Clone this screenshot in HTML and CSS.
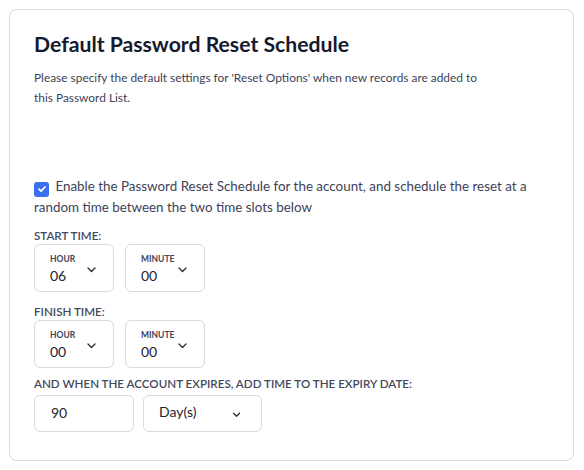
FILE: index.html
```html
<!DOCTYPE html>
<html>
<head>
<meta charset="utf-8">
<link rel="stylesheet" href="styles.css">
</head>
<body>
<div class="card">
  <h2 class="title">Default Password Reset Schedule</h2>
  <p class="desc">Please specify the default settings for 'Reset Options' when new records are added to this Password List.</p>
  <div class="enable">
    <span class="check"><svg width="10" height="10" viewBox="0 0 10 10"><path d="M2 5.2 L4.1 7.2 L8 3" fill="none" stroke="#fff" stroke-width="1.8" stroke-linecap="round" stroke-linejoin="round"/></svg></span>
    Enable the Password Reset Schedule for the account, and schedule the reset at a random time between the two time slots below
  </div>

  <div class="label">START TIME:</div>
  <div class="row">
    <div class="sel">
      <div class="sel-text"><span class="cap">HOUR</span><span class="val">06</span></div>
      <svg class="chev" width="9" height="6" viewBox="0 0 9 6"><path d="M1 1 L4.5 4.5 L8 1" fill="none" stroke="#2b2f3f" stroke-width="1.4" stroke-linecap="round" stroke-linejoin="round"/></svg>
    </div>
    <div class="sel">
      <div class="sel-text"><span class="cap">MINUTE</span><span class="val">00</span></div>
      <svg class="chev" width="9" height="6" viewBox="0 0 9 6"><path d="M1 1 L4.5 4.5 L8 1" fill="none" stroke="#2b2f3f" stroke-width="1.4" stroke-linecap="round" stroke-linejoin="round"/></svg>
    </div>
  </div>

  <div class="label label-fin">FINISH TIME:</div>
  <div class="row">
    <div class="sel">
      <div class="sel-text"><span class="cap">HOUR</span><span class="val">00</span></div>
      <svg class="chev" width="9" height="6" viewBox="0 0 9 6"><path d="M1 1 L4.5 4.5 L8 1" fill="none" stroke="#2b2f3f" stroke-width="1.4" stroke-linecap="round" stroke-linejoin="round"/></svg>
    </div>
    <div class="sel">
      <div class="sel-text"><span class="cap">MINUTE</span><span class="val">00</span></div>
      <svg class="chev" width="9" height="6" viewBox="0 0 9 6"><path d="M1 1 L4.5 4.5 L8 1" fill="none" stroke="#2b2f3f" stroke-width="1.4" stroke-linecap="round" stroke-linejoin="round"/></svg>
    </div>
  </div>

  <div class="label label-exp">AND WHEN THE ACCOUNT EXPIRES, ADD TIME TO THE EXPIRY DATE:</div>
  <div class="row row-exp">
    <div class="input">90</div>
    <div class="unit">
      <span class="val">Day(s)</span>
      <svg class="chev2" width="9" height="6" viewBox="0 0 9 6"><path d="M1.5 1.2 L4.5 4.2 L7.5 1.2" fill="none" stroke="#2b2f3f" stroke-width="1.4" stroke-linecap="round" stroke-linejoin="round"/></svg>
    </div>
  </div>
</div>
</body>
</html>
```

FILE: styles.css
```css
* { box-sizing: border-box; }
html, body { margin: 0; padding: 0; background: #ffffff; }
body {
  font-family: "Lato", "Noto Sans", sans-serif;
  color: #3e4257;
  padding: 9px 10px 0 9px;
}
.card {
  width: 565px;
  height: 452px;
  border: 1px solid #d6dae3;
  border-radius: 8px;
  padding: 20px 24px 0 24px;
}
.title {
  margin: 0;
  font-size: 21.2px;
  line-height: 28px;
  font-weight: 700;
  color: #151a2d;
}
.desc {
  margin: 10px 0 0 0;
  max-width: 452px;
  font-size: 11.9px;
  line-height: 20px;
  color: #3e4257;
}
.enable {
  margin-top: 68px;
  font-size: 13.4px;
  line-height: 20px;
  color: #3e4257;
}
.check {
  display: inline-flex;
  align-items: center;
  justify-content: center;
  width: 15px;
  height: 15px;
  border-radius: 3px;
  background: #3a6ff0;
  vertical-align: -3px;
  margin-right: 3px;
}
.label {
  margin-top: 11px;
  height: 16px;
  font-size: 11.6px;
  line-height: 16px;
  font-weight: 600;
  color: #444a5e;
}
.row {
  display: flex;
  gap: 11px;
  margin-top: 0;
}
.sel {
  width: 80px;
  height: 48px;
  border: 1px solid #d6dae3;
  border-radius: 6px;
  display: flex;
  align-items: flex-start;
  justify-content: space-between;
  padding: 9px 17px 0 15px;
}
.sel-text {
  display: flex;
  flex-direction: column;
}
.cap {
  font-size: 8.5px;
  line-height: 10px;
  font-weight: 700;
  color: #3f4458;
}
.val {
  font-size: 14px;
  line-height: 18px;
  margin-top: 3px;
  color: #1f2334;
}
.chev { margin-top: 13px; }
.label-fin { margin-top: 12px; }
.label-exp { margin-top: 8px; }
.row-exp { gap: 9px; margin-top: 3px; }
.input {
  width: 100px;
  height: 37px;
  border: 1px solid #d6dae3;
  border-radius: 6px;
  padding-left: 16px;
  font-size: 14px;
  line-height: 34px;
  color: #1f2334;
}
.unit {
  width: 119px;
  height: 37px;
  border: 1px solid #d6dae3;
  border-radius: 6px;
  padding: 0 20px 0 15px;
  display: flex;
  align-items: center;
  justify-content: space-between;
}
.unit .val { margin-top: -2px; line-height: 20px; }
.chev2 { margin-top: 3px; }
```
